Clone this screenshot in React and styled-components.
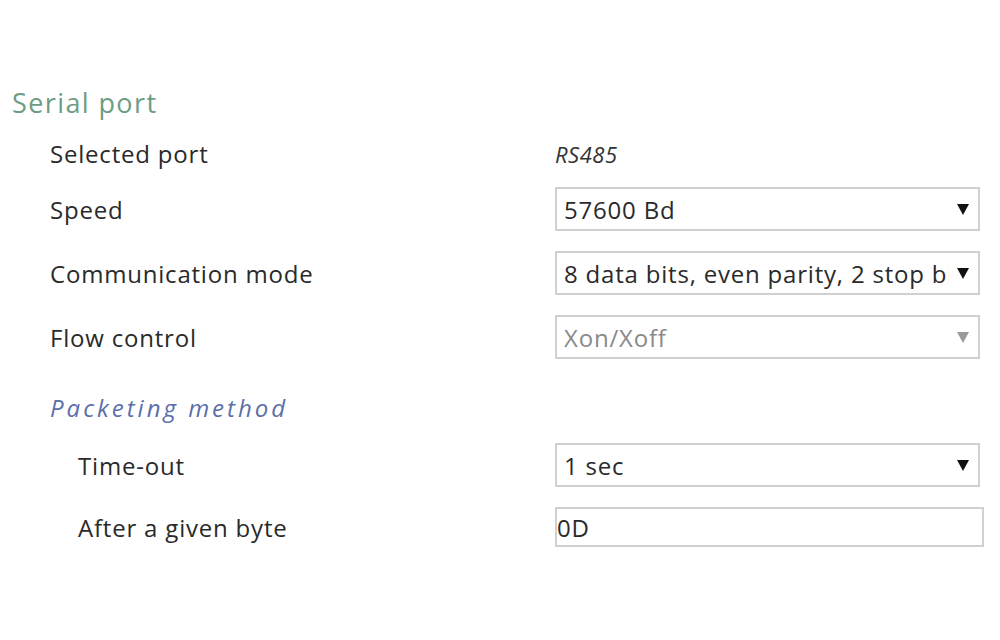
import React from 'react';
import styled, { createGlobalStyle } from 'styled-components';

const GlobalStyle = createGlobalStyle`
  html, body { margin: 0; padding: 0; background: #fff; }
  body { font-family: "Open Sans", "Noto Sans", sans-serif; color: #222; }
`;

const Page = styled.div`
  width: 1000px;
  height: 640px;
  padding: 84px 0 0 12px;
  box-sizing: border-box;
`;

const Heading = styled.h2`
  margin: 0 0 15px;
  font-weight: 400;
  font-size: 27px;
  letter-spacing: 1.4px;
  color: #6c9d83;
  line-height: 38px;
`;

const Row = styled.div`
  display: grid;
  grid-template-columns: ${({ indent }) => 505 - (indent ? 28 : 0)}px 425px;
  align-items: center;
  height: ${({ h }) => h || 44}px;
  margin-bottom: ${({ mb }) => mb ?? 20}px;
  padding-left: ${({ indent }) => 38 + (indent ? 28 : 0)}px;
`;

const Label = styled.div`
  font-size: 24px;
  letter-spacing: 0.8px;
  color: #2a2a2a;
`;

const SubHeading = styled.div`
  font-size: 24px;
  font-style: italic;
  letter-spacing: 3px;
  color: #5b6fab;
`;

const Value = styled.div`
  font-size: 22px;
  font-style: italic;
  letter-spacing: 0.5px;
  color: #333;
`;

const Select = styled.div`
  display: flex;
  align-items: center;
  height: 44px;
  box-sizing: border-box;
  border: 2px solid #d0d0d0;
  padding: 0 9px 0 7px;
  font-size: 24px;
  letter-spacing: 0.8px;
  color: ${({ disabled }) => (disabled ? '#8a8a8a' : '#2a2a2a')};
  background: #fff;
`;

const SelectText = styled.span`
  flex: 1;
  min-width: 0;
  overflow: hidden;
  white-space: nowrap;
  margin-right: 8px;
`;

const Arrow = styled.svg`
  flex: none;
  width: 12px;
  height: 11px;
  fill: ${({ disabled }) => (disabled ? '#9a9a9a' : '#111')};
`;

const Input = styled.div`
  display: flex;
  align-items: center;
  width: 429px;
  height: 40px;
  box-sizing: border-box;
  border: 2px solid #d0d0d0;
  font-size: 24px;
  letter-spacing: 0.8px;
  color: #2a2a2a;
`;

const Dropdown = ({ value, disabled }) => (
  <Select disabled={disabled}>
    <SelectText>{value}</SelectText>
    <Arrow disabled={disabled} viewBox="0 0 12 11">
      <path d="M0 0 H12 L6 11 Z" />
    </Arrow>
  </Select>
);

export default function App() {
  return (
    <>
      <GlobalStyle />
      <Page>
        <Heading>Serial port</Heading>
        <Row h={30}>
          <Label>Selected port</Label>
          <Value>RS485</Value>
        </Row>
        <Row>
          <Label>Speed</Label>
          <Dropdown value="57600 Bd" />
        </Row>
        <Row>
          <Label>Communication mode</Label>
          <Dropdown value="8 data bits, even parity, 2 stop bits" />
        </Row>
        <Row mb={29}>
          <Label>Flow control</Label>
          <Dropdown value="Xon/Xoff" disabled />
        </Row>
        <Row h={38} mb={17}>
          <SubHeading>Packeting method</SubHeading>
        </Row>
        <Row indent>
          <Label>Time-out</Label>
          <Dropdown value="1 sec" />
        </Row>
        <Row indent h={40}>
          <Label>After a given byte</Label>
          <Input>0D</Input>
        </Row>
      </Page>
    </>
  );
}
